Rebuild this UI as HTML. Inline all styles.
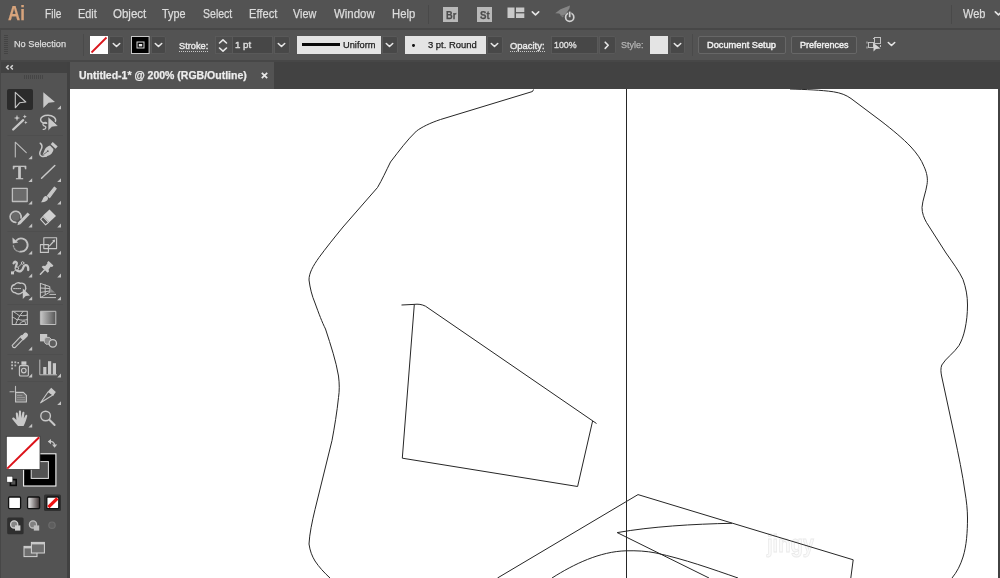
<!DOCTYPE html>
<html lang="en">
<head>
<meta charset="utf-8">
<title>Untitled-1* @ 200% (RGB/Outline)</title>
<style>
*{box-sizing:border-box;margin:0;padding:0}
html,body{width:1000px;height:578px;overflow:hidden;background:#535353}
body{position:relative;font-family:"Liberation Sans",sans-serif;color:#dcdcdc;font-size:13px}
.abs{position:absolute}
#wrap{position:absolute;left:0;top:0;width:1000px;height:578px;overflow:hidden;will-change:transform}
#menubar{position:absolute;left:0;top:0;width:1000px;height:28px;background:#535353}
#menuline{position:absolute;left:0;top:27.5px;width:1000px;height:2px;background:#474747}
#ctrl{position:absolute;left:0;top:30px;width:1000px;height:30px;background:#535353}
#ctrlline{position:absolute;left:0;top:60px;width:1000px;height:2px;background:#474747}
#tabbar{position:absolute;left:0;top:62px;width:1000px;height:27px;background:#424242}
#tab{position:absolute;left:70px;top:62px;width:204px;height:27px;background:#535353}
#canvas{position:absolute;left:70px;top:89px;width:928px;height:489px;background:#fff}
#rightedge{position:absolute;left:998px;top:89px;width:2px;height:489px;background:#424242}
#tools{position:absolute;left:0;top:62px;width:68px;height:516px;background:#535353}
#toolgap{position:absolute;left:67px;top:62px;width:3px;height:516px;background:#414141}
#toolhead{position:absolute;left:0;top:62px;width:67px;height:11px;background:#424242}
.t{position:absolute;white-space:nowrap;transform-origin:0 50%;color:#dcdcdc;-webkit-text-stroke:.25px currentColor}
.mi{top:6px;height:16px;line-height:16px;font-size:13px}
.ct{font-size:11px;line-height:14px;top:38px}
.dd{position:absolute;top:36px;height:18px;background:#484848;border-radius:0 2px 2px 0;box-shadow:inset 0 0 0 1px #595959}
.fld{position:absolute;top:36px;height:18px;background:#474747;box-shadow:inset 0 0 0 1px #595959}
.lb{position:absolute;top:36px;height:18px;background:#e4e4e4}
.btn{position:absolute;top:36px;height:18px;border:1px solid #676767;border-radius:2px;background:#4e4e4e}
.sep{position:absolute;width:1px;background:#494949}
svg{position:absolute;overflow:visible}
.chev{fill:none;stroke:#e6e6e6;stroke-width:1.6;stroke-linecap:round;stroke-linejoin:round}
</style>
</head>
<body>
<div id="wrap">
<div id="menubar"></div>
<div id="menuline"></div>
<div id="ctrl"></div>
<div id="ctrlline"></div>
<div id="tabbar"></div>
<div id="tab"></div>
<div id="canvas"></div>
<div id="rightedge"></div>
<div id="tools"></div>
<div id="toolgap"></div>
<div id="toolhead"></div>
<div class="abs" style="left:0;top:29px;width:1px;height:549px;background:#474747"></div>

<!-- MENU BAR -->
<div class="t" id="ailogo" style="left:8px;top:0px;font-size:21px;line-height:26px;font-weight:bold;color:#d8a47c;transform:scaleX(.80)">Ai</div>
<div class="t mi" style="left:45px;transform:scaleX(0.843);font-size:12px">File</div>
<div class="t mi" style="left:77.5px;transform:scaleX(0.909);font-size:12px">Edit</div>
<div class="t mi" style="left:112.5px;transform:scaleX(0.960);font-size:12px">Object</div>
<div class="t mi" style="left:162px;transform:scaleX(0.903);font-size:12px">Type</div>
<div class="t mi" style="left:202.5px;transform:scaleX(0.878);font-size:12px">Select</div>
<div class="t mi" style="left:248.5px;transform:scaleX(0.929);font-size:12px">Effect</div>
<div class="t mi" style="left:293px;transform:scaleX(0.903);font-size:12px">View</div>
<div class="t mi" style="left:333.8px;transform:scaleX(0.953);font-size:12px">Window</div>
<div class="t mi" style="left:391.8px;transform:scaleX(0.940);font-size:12px">Help</div>
<div class="sep" style="left:428px;top:5px;height:19px"></div>
<div class="abs" style="left:443px;top:7px;width:15px;height:15px;background:#b9b9b9"></div>
<div class="t" style="left:445.5px;top:8px;font-size:11px;line-height:14px;color:#4c4c4c;font-weight:bold;transform:scaleX(.84)">Br</div>
<div class="abs" style="left:477px;top:7px;width:15px;height:15px;background:#b9b9b9"></div>
<div class="t" style="left:479.5px;top:8px;font-size:11px;line-height:14px;color:#4c4c4c;font-weight:bold;transform:scaleX(.88)">St</div>
<svg style="left:507px;top:7px" width="18" height="12" viewBox="0 0 18 12"><rect x="0.5" y="0.5" width="7" height="10.5" fill="#c9c9c9"/><rect x="9" y="0.5" width="8.3" height="4.6" fill="#c9c9c9"/><rect x="9" y="6.4" width="8.3" height="4.6" fill="#c9c9c9"/></svg>
<svg style="left:531px;top:9.6px" width="9" height="7" viewBox="0 0 9 7"><path class="chev" d="M1.3 1.8 L4.5 4.8 L7.7 1.8"/></svg>
<svg style="left:554px;top:5px" width="22" height="18" viewBox="0 0 22 18"><path d="M1.2 8.2 L6.5 4.2 L16 .6 L15.4 3.6 L11.4 9.6 L7.2 10.4 L5.2 8.6 Z" fill="#858585"/><path d="M6 10 L8.6 12.6 L10.4 10.4 Z" fill="#7a7a7a"/><circle cx="15.7" cy="12.2" r="4.1" fill="#535353" stroke="#d0d0d0" stroke-width="1.7"/><rect x="14.1" y="6" width="3.2" height="6.4" fill="#535353"/><rect x="14.85" y="6.6" width="1.7" height="5.6" fill="#d4d4d4"/></svg>
<div class="sep" style="left:951px;top:5px;height:19px"></div>
<div class="t mi" style="left:962.5px;transform:scaleX(0.920);font-size:12px">Web</div>
<svg style="left:991.7px;top:9.6px" width="9" height="7" viewBox="0 0 9 7"><path class="chev" d="M3.3 1.8 L6.5 4.8 L9.7 1.8"/></svg>

<!-- CONTROL BAR -->
<svg style="left:4px;top:34px" width="5" height="22" viewBox="0 0 5 22"><g stroke="#444" stroke-width="1"><path d="M0 1.5h4M0 3.5h4M0 5.5h4M0 7.5h4M0 9.5h4M0 11.5h4M0 13.5h4M0 15.5h4M0 17.5h4M0 19.5h4"/></g></svg>
<div class="t ct" style="left:14.3px;top:37px;transform:scaleX(0.965);font-size:9.5px">No Selection</div>
<div class="sep" style="left:83px;top:34px;height:22px;background:#4a4a4a"></div>
<svg style="left:90px;top:36px" width="18" height="18" viewBox="0 0 18 18"><rect width="18" height="18" fill="#fff"/><path d="M1.5 16.5 L16.5 1.5" stroke="#d9161c" stroke-width="1.8"/></svg>
<div class="dd" style="left:109px;width:15px"></div>
<svg style="left:112px;top:42px" width="9" height="7" viewBox="0 0 9 7"><path class="chev" d="M1.3 1.5 L4.5 4.5 L7.7 1.5"/></svg>
<svg style="left:131px;top:36px" width="19" height="18" viewBox="0 0 19 18"><rect x=".5" y=".5" width="17.6" height="17" fill="#000" stroke="#c8c8c8"/><rect x="6" y="6" width="7" height="6" fill="none" stroke="#d8d8d8" stroke-width="1"/><rect x="7.8" y="8" width="3.4" height="2.4" fill="#ececec"/></svg>
<div class="dd" style="left:151px;width:15px"></div>
<svg style="left:154px;top:42px" width="9" height="7" viewBox="0 0 9 7"><path class="chev" d="M1.3 1.5 L4.5 4.5 L7.7 1.5"/></svg>
<div class="t ct" style="left:178.8px;top:38.5px;color:#eaeaea;transform:scaleX(0.970);font-size:9.5px;-webkit-text-stroke:.4px currentColor">Stroke:</div>
<div class="abs" style="left:179px;top:51px;width:29px;height:1px;background-image:linear-gradient(90deg,#c8c8c8 50%,transparent 50%);background-size:2px 1px"></div>
<div class="abs" style="left:215px;top:36px;width:17.5px;height:18px;background:#4d4d4d;box-shadow:inset 0 0 0 1px #5a5a5a"></div>
<svg style="left:218px;top:38px" width="10" height="15" viewBox="0 0 10 15"><path class="chev" d="M1.5 5 L5 1.8 L8.5 5 M1.5 10 L5 13.2 L8.5 10" stroke-width="1.2"/></svg>
<div class="fld" style="left:232px;width:41px"></div>
<div class="t ct" style="left:234.8px;transform:scaleX(1.021);font-size:9.5px;-webkit-text-stroke:.4px currentColor">1 pt</div>
<div class="dd" style="left:273.5px;width:16px"></div>
<svg style="left:277px;top:42px" width="9" height="7" viewBox="0 0 9 7"><path class="chev" d="M1.3 1.5 L4.5 4.5 L7.7 1.5"/></svg>
<div class="lb" style="left:297px;width:84px"></div>
<div class="abs" style="left:302px;top:43.4px;width:37.5px;height:3px;background:#0a0a0a"></div>
<div class="t ct" style="left:343.3px;color:#1c1c1c;transform:scaleX(0.977);font-size:9.5px">Uniform</div>
<div class="dd" style="left:382px;width:15.5px"></div>
<svg style="left:385px;top:42px" width="9" height="7" viewBox="0 0 9 7"><path class="chev" d="M1.3 1.5 L4.5 4.5 L7.7 1.5"/></svg>
<div class="lb" style="left:404.6px;width:81.2px"></div>
<div class="abs" style="left:412.2px;top:43.8px;width:2.8px;height:2.8px;border-radius:50%;background:#111"></div>
<div class="t ct" style="left:427.5px;color:#1c1c1c;transform:scaleX(0.993);font-size:9.5px">3 pt. Round</div>
<div class="dd" style="left:487px;width:15.5px"></div>
<svg style="left:490px;top:42px" width="9" height="7" viewBox="0 0 9 7"><path class="chev" d="M1.3 1.5 L4.5 4.5 L7.7 1.5"/></svg>
<div class="t ct" style="left:510px;top:38.5px;color:#eaeaea;transform:scaleX(0.990);font-size:9.5px;-webkit-text-stroke:.4px currentColor">Opacity:</div>
<div class="abs" style="left:510px;top:51px;width:35px;height:1px;background-image:linear-gradient(90deg,#c8c8c8 50%,transparent 50%);background-size:2px 1px"></div>
<div class="fld" style="left:551.3px;width:47px"></div>
<div class="t ct" style="left:554.4px;transform:scaleX(0.930);font-size:9.5px;-webkit-text-stroke:.4px currentColor">100%</div>
<div class="dd" style="left:599px;width:16.5px"></div>
<svg style="left:603px;top:40px" width="8" height="11" viewBox="0 0 8 11"><path class="chev" d="M2.2 2.2 L5.2 5.3 L2.2 8.4"/></svg>
<div class="t ct" style="left:621.3px;color:#b4b4b4;transform:scaleX(0.947);font-size:9.5px">Style:</div>
<div class="abs" style="left:650px;top:36px;width:18.3px;height:18px;background:#e4e4e4"></div>
<div class="dd" style="left:669.5px;width:15.5px"></div>
<svg style="left:672.5px;top:42px" width="9" height="7" viewBox="0 0 9 7"><path class="chev" d="M1.3 1.5 L4.5 4.5 L7.7 1.5"/></svg>
<div class="sep" style="left:692px;top:34px;height:22px;background:#4a4a4a"></div>
<div class="btn" style="left:697.5px;width:88px"></div>
<div class="t ct" style="left:707.2px;color:#f2f2f2;transform:scaleX(0.975);font-size:9.5px;-webkit-text-stroke:.4px currentColor">Document Setup</div>
<div class="btn" style="left:790.5px;width:66.5px"></div>
<div class="t ct" style="left:799.5px;color:#f2f2f2;transform:scaleX(0.947);font-size:9.5px;-webkit-text-stroke:.4px currentColor">Preferences</div>
<svg style="left:866px;top:36px" width="18" height="17" viewBox="0 0 18 17"><g fill="none" stroke="#c0c0c0" stroke-width="1"><rect x="8.5" y="1.5" width="6" height="6"/><rect x="2.5" y="6.5" width="5" height="5"/><path d="M7 2.5h2M14.5 9v2M1 5.5v2M1 10.5v2"/></g><path d="M7.5 7 L7.5 15.5 L10 13 L14.5 12.5 Z" fill="#d6d6d6"/></svg>
<svg style="left:887px;top:41px" width="9" height="7" viewBox="0 0 9 7"><path class="chev" d="M1.3 1.5 L4.5 4.5 L7.7 1.5"/></svg>

<!-- TAB -->
<div class="t ct" id="tabtitle" style="left:78.8px;top:68.5px;font-weight:bold;color:#ededed;transform:scaleX(1.050);font-size:10px">Untitled-1* @ 200% (RGB/Outline)</div>
<svg style="left:260.3px;top:70.6px" width="9" height="9" viewBox="0 0 9 9"><path d="M1.8 1.8 L7.2 7.2 M7.2 1.8 L1.8 7.2" stroke="#e8e8e8" stroke-width="1.7" fill="none"/></svg>

<!-- TOOLHEAD -->
<svg style="left:5px;top:64px" width="10" height="7" viewBox="0 0 10 7"><path d="M3.6 1.2 L1.6 3.3 L3.6 5.4 M7.8 1.2 L5.8 3.3 L7.8 5.4" fill="none" stroke="#d6d6d6" stroke-width="1.5"/></svg>
<svg style="left:24px;top:75px" width="20" height="5" viewBox="0 0 20 5"><path d="M.5 0v4M2.5 0v4M4.5 0v4M6.5 0v4M8.5 0v4M10.5 0v4M12.5 0v4M14.5 0v4M16.5 0v4M18.5 0v4" stroke="#454545" stroke-width="1"/></svg>

<svg id="toolsvg" style="left:0;top:0;will-change:transform" width="70" height="578" viewBox="0 0 70 578">
<defs>
<linearGradient id="gr1" x1="0" y1="0" x2="1" y2="0"><stop offset="0" stop-color="#c4c4c4"/><stop offset="1" stop-color="#555"/></linearGradient>
<linearGradient id="gr2" x1="0" y1="0" x2="1" y2="0"><stop offset="0" stop-color="#f4f4f4"/><stop offset="1" stop-color="#3a3030"/></linearGradient>
<path id="ct" d="M0 -3.8 L0 0 L-3.8 0 Z" fill="#c4c4c4" stroke="none"/>
</defs>
<g fill="none" stroke="#c8c8c8" stroke-width="1.2" stroke-linejoin="round" stroke-linecap="round">
<path d="M7.5 135.5 H63 M7.5 231.5 H63 M7.5 304.5 H63 M7.5 354.5 H63 M7.5 381.5 H63" stroke="#4e4e4e" stroke-width="1" stroke-linecap="butt"/>
<!-- row 1 -->
<rect x="7" y="89" width="26" height="21" rx="2" fill="#2b2b2b" stroke="none"/>
<path d="M15.3 92.3 L15.3 107.8 L19.6 102.8 L25.8 102 Z" stroke-width="1.1"/>
<path d="M43.3 92.3 L43.3 108 L48.6 102.8 L55 102 Z" fill="#c8c8c8" stroke="none"/>
<use href="#ct" x="61.0" y="109.3"/>
<!-- row 2: magic wand, lasso -->
<path d="M13.2 129.5 L23.2 120.2" stroke-width="2.3"/>
<path d="M17 114.8 L17.8 117.2 L20.2 118 L17.8 118.8 L17 121.2 L16.2 118.8 L13.8 118 L16.2 117.2 Z" fill="#c8c8c8" stroke="none"/>
<path d="M24.8 114.6 L25.4 116 L26.8 116.6 L25.4 117.2 L24.8 118.6 L24.2 117.2 L22.8 116.6 L24.2 116 Z" fill="#c8c8c8" stroke="none"/>
<path d="M25.8 120.8 L26.3 122 L27.5 122.5 L26.3 123 L25.8 124.2 L25.3 123 L24.1 122.5 L25.3 122 Z" fill="#c8c8c8" stroke="none"/>
<path d="M55.4 121.6 C56.8 118 52.6 115.3 48 115.3 C43.4 115.3 40.4 117.3 40.6 119.9 C40.8 122.4 43.6 123.6 46.8 123.2" stroke-width="1.4"/>
<path d="M46.2 122.6 C44 122 42.2 123.6 43.2 125.2 C44.2 126.6 46.4 126 45.8 127.8 C45.4 129 44.2 129.6 43.2 129.4" stroke-width="1.3"/>
<path d="M48.1 117 L48.1 130.7 L51.8 127 L58 126 Z" fill="#cacaca" stroke="#535353" stroke-width=".5"/>
<!-- row 3: curvature/pen -->
<path d="M15.3 157 L15.3 142.2 L26.3 152.6" stroke-width="1.1" stroke="#bdbdbd"/>
<use href="#ct" x="32.2" y="159.3"/>
<path d="M40.2 143.2 C42.6 145 42.3 147.6 40.8 150.2 C39.2 153 39.4 155.6 41.6 156.2 C43 156.6 45 156.4 46.4 156" stroke-width="1.5"/>
<path d="M42.6 155 L44.8 149.6 C45.8 147.6 48 146 50 145.6 L53.4 149 C53.6 150.8 52.4 153 50.6 154.4 C49 155.6 47.2 156.2 45.6 156.2 Z" fill="#c8c8c8" stroke="none"/><path d="M43.6 154.4 L47.4 151.6" stroke="#5a5a5a" stroke-width=".8"/><circle cx="47.8" cy="151.2" r=".9" fill="#5a5a5a" stroke="none"/>
<path d="M52.7 141.9 L57.7 146.4 L55.5 148.8 L50.7 144.2 Z" fill="#c8c8c8" stroke="none"/>
<!-- row 4: type, line -->
<text x="12.8" y="178.6" font-family="'Liberation Serif',serif" font-size="19" fill="#c6c6c6" stroke="#c6c6c6" stroke-width=".55" textLength="13.6" lengthAdjust="spacingAndGlyphs">T</text>
<use href="#ct" x="32.2" y="182.1"/>
<path d="M41.6 178.2 L54.8 165.5" stroke-width="1.5"/>
<use href="#ct" x="61.0" y="182.1"/>
<!-- row 5: rect, brush -->
<rect x="12.4" y="188.3" width="14.8" height="13.2" fill="#6b6b6b" stroke="#bebebe" stroke-width="1.3"/>
<use href="#ct" x="32.2" y="204.6"/>
<path d="M47.4 195.8 L54.4 187.2 L56.2 188.6 L49.6 197.6 Z" fill="#c8c8c8" stroke="#c8c8c8" stroke-width="1.1"/>
<path d="M45 196.2 C46.5 195.6 48.3 197.2 48 198.8 C47.5 201.5 44 202.6 40.8 202.2 C42.8 200.8 42.6 197.5 45 196.2 Z" fill="#c8c8c8" stroke="none"/>
<use href="#ct" x="61.0" y="204.6"/>
<!-- row 6: shaper, eraser -->
<path d="M15.8 222.3 A5.5 5.5 0 1 1 21 218" stroke-width="1.7" stroke="#c2c2c2"/>
<circle cx="15.6" cy="216.8" r="4" fill="#6a6a6a" stroke="none"/>
<path d="M18.2 222.2 L27.6 212.4 L29.8 214.6 L20.4 224.2 L17.4 225.2 Z" fill="#c8c8c8" stroke="none"/>
<use href="#ct" x="32.2" y="227.4"/>
<path d="M49.5 209.6 L56 216 L49.3 222.2 L43 215.6 Z" fill="#d0d0d0" stroke="none"/>
<path d="M43 216.5 L40.6 219.4 L45.6 224.8 L48.6 222.4 Z" stroke-width="1.1" stroke="#d0d0d0"/>
<use href="#ct" x="61.0" y="227.4"/>
<!-- row 7: rotate, scale -->
<path d="M16.5 240.3 A6.6 6.6 0 1 1 20 251.6" stroke-width="1.8" stroke="#c2c2c2"/>
<path d="M19.6 251.6 A6.6 6.6 0 0 1 13.4 245.5" stroke-width="1.3" stroke="#a0a0a0" stroke-dasharray="1.4 1.2"/>
<path d="M12.4 237.6 L12.8 243.4 L18.2 242.6 Z" fill="#c8c8c8" stroke="none"/>
<use href="#ct" x="32.2" y="254.6"/>
<rect x="43.8" y="237.8" width="12.8" height="10.8" stroke-width="1.1"/>
<rect x="40.4" y="244.6" width="8" height="7.8" stroke-width="1.1"/>
<path d="M49.5 245.8 L54 241" stroke-width="1.2"/>
<path d="M55.2 239.6 L54.6 242.6 L52.2 240.2 Z" fill="#c8c8c8" stroke="none"/>
<use href="#ct" x="61.0" y="254.6"/>
<!-- row 8: width, puppet pin -->
<path d="M13.6 263.2 C15 260.5 17.5 262 16.6 264.5 C15.8 267 14.5 269 17 270.6 C20 272.4 22.6 270.5 23.2 267.8 C23.8 265 26.8 264.2 27.8 266.4 C28.4 267.8 28.2 269 28.2 270" stroke-width="2.3" stroke="#c4c4c4"/>
<path d="M12.5 273 L22.4 263" stroke-width=".9"/>
<rect x="11" y="271.4" width="3" height="3" fill="#c8c8c8" stroke="none"/>
<circle cx="17" cy="268.5" r="1.6" fill="#535353" stroke-width=".9"/>
<circle cx="22.6" cy="263" r="1.3" fill="#535353" stroke-width=".9"/>
<use href="#ct" x="32.2" y="277.4"/>
<path d="M48.6 261 L53.4 265.6 L52.2 267 L50.6 266.8 L48.6 269.4 L49 271.6 L47.6 272.8 L41.6 267 L43 265.8 L45.2 266 L47.4 263.6 L47.2 262.2 Z" fill="#c8c8c8" stroke="none"/>
<path d="M44.4 270 L40.4 274.2" stroke-width="1.5"/>
<use href="#ct" x="61.0" y="277.4"/>
<!-- row 9: shape builder, perspective -->
<path d="M14.4 284.8 C16 282.6 19 282.4 20.4 283.4 C22.6 282.6 25.6 284.2 25.6 287 C26.4 289 25 291.6 22 292.6 C20 294.6 16.5 294.2 15.4 292.8 C12.4 292.8 10.6 289.6 11.6 287.4 C11.8 286 13 285 14.4 284.8 Z" stroke-width="1.4" stroke="#c4c4c4"/>
<path d="M13.6 288.6 L21.5 288.6" stroke-width="1" stroke-dasharray="1 1" stroke="#c4c4c4"/>
<path d="M22.8 288.4 L22.8 299 L25.8 296 L30 295.4 Z" fill="#c8c8c8" stroke="none"/>
<use href="#ct" x="32.2" y="300.2"/>
<path d="M40.4 283.4 L40.4 297.6 L55.6 297.6 M40.4 283.4 L49.8 286.6 L49.8 292.2 L40.4 297.6 M45.2 285 L45.2 294.6 M40.4 288 L49.8 288.6 M40.4 292.4 L49.8 291 M49.8 294.4 L55.6 294.4" stroke-width="1" stroke="#c4c4c4"/>
<path d="M49.8 288 L55 292.4 L49.8 292.4 Z" fill="#8a8a8a" stroke="none"/>
<use href="#ct" x="61.0" y="300.2"/>
<!-- row 10: mesh, gradient -->
<rect x="12.3" y="311.3" width="15" height="13.2" stroke-width="1.1" stroke="#c4c4c4" fill="#4a4a4a"/>
<path d="M15.6 324.5 C17 320 19.5 315.5 23.2 311.3 M17.2 320 C15.4 318.4 14 317.6 12.3 317.2 M19.6 316 C17.4 314 15.6 313 13.6 311.8 M18.2 319.4 C21 320.4 24 320.4 27.3 319.6 M20.6 315.4 C23 316 25.2 315.8 27.3 315 M19 324.5 C20.4 322.6 22.4 321.4 24.6 321 C25.4 322.2 25.6 323.4 25.4 324.5" stroke-width="1" stroke="#c4c4c4"/>
<rect x="40.8" y="311.3" width="15" height="13.2" fill="url(#gr1)" stroke="#c0c0c0" stroke-width="1"/>
<!-- row 11: eyedropper, blend -->
<path d="M13.2 347.4 L12.2 345.4 L21.4 335.6 L24.2 338.2 L15 347.6 Z" stroke-width="1.1" fill="#5a5a5a"/>
<path d="M21 337.4 L24.6 333.6 C26 332.4 28.2 334.4 27 336 L23.4 339.6 Z" fill="#c8c8c8" stroke="#c8c8c8" stroke-width="1.3"/>
<use href="#ct" x="32.2" y="350.4"/>
<rect x="40" y="334" width="7.2" height="7.4" fill="#c8c8c8" stroke="none"/>
<path d="M46 337.4 L49.4 337.4 L51.4 339.4 L51.4 342.4 L49.4 344.2 L46 344.2 L44.4 342.4 L44.4 339.4 Z" fill="#8c8c8c" stroke="#c0c0c0" stroke-width="1"/>
<circle cx="52.8" cy="343.4" r="3.7" fill="#5d5d5d" stroke="#c8c8c8" stroke-width="1.3"/>
<!-- row 12: sprayer, graph -->
<rect x="19.4" y="365.6" width="9" height="10.4" rx="1.3" stroke-width="1.1" fill="#5a5a5a"/>
<rect x="21.4" y="361.4" width="5" height="3.4" fill="#c8c8c8" stroke="none"/>
<circle cx="23.8" cy="370.6" r="2.3" stroke-width="1.1"/>
<g fill="#bcbcbc" stroke="none"><rect x="11.2" y="361.4" width="1.8" height="1.8"/><rect x="14.4" y="361.4" width="1.8" height="1.8"/><rect x="17.4" y="362" width="1.6" height="1.6"/><rect x="11.2" y="364.4" width="1.8" height="1.8"/><rect x="14.4" y="364.6" width="1.8" height="1.8"/><rect x="11.2" y="367.6" width="1.8" height="1.8"/></g>
<use href="#ct" x="32.2" y="377.4"/>
<path d="M39.8 360 L39.8 374.8 L56.6 374.8" stroke-width="1" stroke="#bcbcbc"/>
<rect x="43.2" y="367" width="3.2" height="7.4" fill="#c8c8c8" stroke="none"/>
<rect x="48" y="361.2" width="3.2" height="13.2" fill="#c8c8c8" stroke="none"/>
<rect x="52.8" y="363.2" width="3.2" height="11.2" fill="#c8c8c8" stroke="none"/>
<use href="#ct" x="61.0" y="377.4"/>
<!-- row 13: artboard, slice -->
<path d="M15.5 386.4 L15.5 392.4 M10 391.8 L14 391.8" stroke-width="1.1" stroke="#bcbcbc"/>
<path d="M15.6 392.4 L23.4 392.4 L26.4 395.4 L26.4 402 L15.6 402 Z" stroke-width="1.1" fill="#6e6e6e"/>
<path d="M17.4 395.4 L22 395.4 M17.4 397.6 L24.6 397.6 M17.4 399.8 L24.6 399.8" stroke-width=".9" stroke="#9a9a9a"/>
<path d="M40.6 402.8 L48.2 391.8 L53.2 394.8 Z" stroke-width="1.1"/>
<path d="M48 391.6 L51.2 387.8 L55.8 392 L53.2 395.8 Z" fill="#c8c8c8" stroke="none"/>
<use href="#ct" x="61.0" y="405"/>
<!-- row 14: hand, zoom -->
<path d="M18 426 C16 423.5 14 421 12.4 419.2 C11.6 418 13.2 417 14.4 418 L16.4 420 L15.8 413.6 C15.7 412.2 17.6 412 17.9 413.4 L18.8 418 L18.9 411.6 C18.9 410.2 20.9 410.2 21 411.6 L21.2 418 L22.4 412.6 C22.7 411.3 24.6 411.6 24.4 413 L23.8 418.6 L25.4 415.4 C26 414.2 27.7 415 27.2 416.3 C26.4 419 25.6 422.5 23.6 426 Z" fill="#c8c8c8" stroke="none"/>
<use href="#ct" x="32.2" y="427.6"/>
<circle cx="45.6" cy="416" r="4.8" stroke-width="1.4" fill="#5b5b5b"/>
<path d="M49.6 420 L54.6 425" stroke-width="2"/>
</g>
<!-- fill / stroke -->
<rect x="23.6" y="453.8" width="32.3" height="32.2" fill="#000" stroke="#f4f4f4" stroke-width="1.1"/>
<rect x="31.2" y="461.6" width="17.2" height="16.8" fill="#535353" stroke="#e0e0e0" stroke-width="1"/>
<rect x="6.3" y="436.3" width="33.7" height="33.2" fill="#fff" stroke="#3c3c3c" stroke-width=".8"/>
<path d="M7.2 468.6 L39.2 437.2" stroke="#dc1219" stroke-width="2"/>
<path d="M48.6 441.6 C52.5 440.6 54.8 442.6 54.6 446" fill="none" stroke="#c0c0c0" stroke-width="1.3"/>
<path d="M47.8 441.6 L51 439 L51 444.2 Z M54.6 447.8 L52 444.6 L57.2 444.6 Z" fill="#c8c8c8"/>
<rect x="10.4" y="479.6" width="5.8" height="5.8" fill="none" stroke="#0a0a0a" stroke-width="1.6"/>
<rect x="6.8" y="476.2" width="6" height="6" fill="#fff" stroke="#2a2a2a" stroke-width=".6"/>
<!-- color buttons -->
<rect x="44" y="494.6" width="17" height="16.4" fill="#303030" rx="1.5"/>
<rect x="8.6" y="497" width="12" height="11.6" fill="#fff" stroke="#111" stroke-width="1.3" rx="1"/>
<rect x="27.6" y="497" width="12" height="11.6" fill="url(#gr2)" stroke="#111" stroke-width="1.3" rx="1"/>
<rect x="46.8" y="497" width="12" height="11.6" fill="#fff" stroke="#111" stroke-width="1.3" rx="1"/>
<path d="M48.4 507.2 L57.4 498.4" stroke="#ee1111" stroke-width="3.2"/>
<!-- draw modes -->
<rect x="7.2" y="517.6" width="16.4" height="16.6" fill="#2f2f2f" rx="1.5"/>
<circle cx="14.2" cy="524.4" r="3.6" fill="#858585" stroke="#cfcfcf" stroke-width="1.3"/>
<rect x="15" y="525.4" width="5.4" height="5.2" fill="#cfcfcf"/>
<circle cx="33" cy="524.4" r="3.6" fill="#808080" stroke="#bdbdbd" stroke-width="1.3"/>
<rect x="33.8" y="525.4" width="5.4" height="5.2" fill="#bdbdbd"/>
<circle cx="52" cy="525.2" r="3.2" fill="#5e5e5e" stroke="#6c6c6c" stroke-width="1.2"/>
<!-- screen mode -->
<rect x="24" y="546.4" width="13" height="10.2" fill="#6e6e6e" stroke="#d4d4d4" stroke-width="1"/>
<rect x="31.4" y="542.4" width="13" height="10.6" fill="#6e6e6e" stroke="#d4d4d4" stroke-width="1"/>
<path d="M31.4 543.6 h13" stroke="#c8c8c8" stroke-width="1.6"/>
<path d="M24 547.6 h7" stroke="#c8c8c8" stroke-width="1.6"/>
</svg>

<svg id="art" style="left:70px;top:89px;overflow:hidden" width="928" height="489" viewBox="70 89 928 489">
<text x="767" y="551.6" font-family="'Liberation Sans',sans-serif" font-size="24" font-weight="bold" fill="#fafafa" stroke="#e9e9e9" stroke-width=".8" textLength="47" lengthAdjust="spacingAndGlyphs">jingy</text>
<g fill="none" stroke="#262626" stroke-width="1">
<path d="M626.5 89 L626.5 578"/>
<path d="M533.5 89.5 L532.5 91.5 L440.5 119.5 C430 123 422 127 416.5 131 C407 140 399 151 390.5 162 C386 171 382 180 377.5 187.5 L343 227 C334 238 326 248 319 257.5 C313 266 309 273 309 280 C310 288 312 296 315 303 C319 314 322 322 325.5 329 C331 346 336 361 338.5 376 C339.5 384 339.5 391 338.5 397.5 C337 412 334.5 427 332 440.5 L315 509.5 C312 522 309.5 534 309 544 C310 551 312 556 315 561 C319 567 324 572.5 330 578"/>
<path d="M790 89 C806 89.5 821 90 833.5 91.8 C841 93 846 95 851 98.5 C861 106 871 113.5 881 121 C892 129.5 903 138.5 911 147 C917 153.5 921.5 160 924 166.5 C927 173 928 179 927 184.5 C926 192 922.5 200 922 207.5 C922 213 924 218 926.5 222.5 L946 253 C953 263 959 271 963 279.5 C966 288 967.5 296 967.5 305 C967.5 314 966.5 322 965 329 C963.5 336 961.5 341 959 345.5 C954 353 946 358 941.8 365 C940.5 368.5 940.8 372 941.6 376 L954.5 436 C958.5 455 962.5 474 965 492 C966.5 501 967.5 510 967.5 518 C967.5 532 966.5 546 963 557 C960.5 565 957 572 952 578"/>
<path d="M401.5 305 L414 304.4 C418 303.8 422 304.4 425.5 306.2 L596.5 423.5"/>
<path d="M414.3 304.6 L402.3 458.2 L577.6 486.5 L592.6 421"/>
<path d="M497.5 578 L638 494.6 L853.2 559.8 L850.8 578"/>
<path d="M732 523.3 C693 524 651 526.6 617.2 532.6 L709 578"/>
<path d="M552 578 C574 564 600 551.5 626 550.8 C637 550.6 646 551 656 553 C684 559 712 569 738 578"/>
</g>
</svg>

</div>
</body>
</html>
